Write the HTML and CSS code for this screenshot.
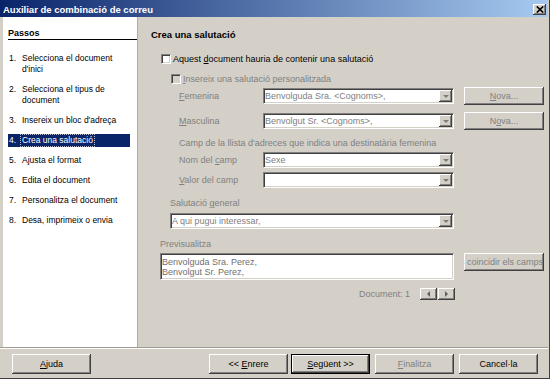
FILE: index.html
```html
<!DOCTYPE html>
<html lang="ca">
<head>
<meta charset="utf-8">
<title>Auxiliar de combinació de correu</title>
<link rel="stylesheet" href="styles.css">
</head>
<body>
<div class="window">
  <div class="titlebar">
    <span class="title">Auxiliar de combinació de correu</span>
    <span class="close"><svg width="8" height="7" viewBox="0 0 8 7"><path d="M0.8 0.5 L7.2 6.5 M7.2 0.5 L0.8 6.5" stroke="#000" stroke-width="1.7" fill="none"/></svg></span>
  </div>
  <div class="main">
    <div class="steps">
      <div class="steps-head">Passos</div>
      <ol class="step-list">
        <li class="step"><span class="num">1.</span><span class="label">Selecciona el document d'inici</span></li>
        <li class="step"><span class="num">2.</span><span class="label">Selecciona el tipus de document</span></li>
        <li class="step"><span class="num">3.</span><span class="label">Insereix un bloc d'adreça</span></li>
        <li class="step current"><span class="num">4.</span><span class="label"><span class="focus">Crea una salutació</span></span></li>
        <li class="step"><span class="num">5.</span><span class="label">Ajusta el format</span></li>
        <li class="step"><span class="num">6.</span><span class="label">Edita el document</span></li>
        <li class="step"><span class="num">7.</span><span class="label">Personalitza el document</span></li>
        <li class="step"><span class="num">8.</span><span class="label">Desa, imprimeix o envia</span></li>
      </ol>
    </div>
    <div class="page">
      <div class="page-title">Crea una salutació</div>
      <div class="check check-main"><span class="box"></span><span>Aquest <u>d</u>ocument hauria de contenir una salutació</span></div>
      <div class="check check-sub dim"><span class="box box-off"></span><span><u>I</u>nsereix una salutació personalitzada</span></div>
      <div class="salut-grid">
        <div class="flabel dim"><u>F</u>emenina</div>
        <div class="combo"><span class="combo-text">Benvolguda Sra. &lt;Cognoms&gt;,</span><span class="combo-btn"></span></div>
        <div class="btn side-btn dim"><span><u>N</u>ova...</span></div>
        <div class="flabel dim"><u>M</u>asculina</div>
        <div class="combo"><span class="combo-text">Benvolgut Sr. &lt;Cognoms&gt;,</span><span class="combo-btn"></span></div>
        <div class="btn side-btn dim"><span>N<u>o</u>va...</span></div>
      </div>
      <div class="note dim">Camp de la llista d'adreces que indica una destinatària femenina</div>
      <div class="field-grid">
        <div class="flabel dim">Nom del <u>c</u>amp</div>
        <div class="combo"><span class="combo-text">Sexe</span><span class="combo-btn"></span></div>
        <div class="flabel dim"><u>V</u>alor del camp</div>
        <div class="combo"><span class="combo-text"></span><span class="combo-btn"></span></div>
      </div>
      <div class="gen-label dim">Salutació <u>g</u>eneral</div>
      <div class="combo gen-combo"><span class="combo-text">A qui pugui interessar,</span><span class="combo-btn"></span></div>
      <div class="prev-label dim">Previsualitza</div>
      <div class="prev-row">
        <div class="preview">Benvolguda Sra. Perez,<br>Benvolgut Sr. Perez,</div>
        <div class="btn match-btn dim"><span>Fes coincidir els camps</span></div>
      </div>
      <div class="doc-row">
        <span class="doc-text dim">Document: 1</span>
        <span class="btn nav-btn"><span class="tri-left"></span></span>
        <span class="btn nav-btn"><span class="tri-right"></span></span>
      </div>
    </div>
  </div>
  <div class="buttonbar">
    <div class="btn pbtn"><span><u>A</u>juda</span></div>
    <div class="spacer"></div>
    <div class="btn pbtn"><span>&lt;&lt; <u>E</u>nrere</span></div>
    <div class="btn pbtn default gap3"><span><u>S</u>egüent &gt;&gt;</span></div>
    <div class="btn pbtn dim gap5"><span><u>F</u>inalitza</span></div>
    <div class="btn pbtn gap5"><span>Cancel·la</span></div>
  </div>
</div>
</body>
</html>
```
FILE: styles.css
```css
body {
  margin: 0;
  font-family: "Liberation Sans", Arial, sans-serif;
  font-size: 9px;
  color: #000;
  background: #d4d0c8;
}

.window {
  width: 550px;
  height: 379px;
  box-sizing: border-box;
  display: flex;
  flex-direction: column;
  background: #d4d0c8;
  border-right: 1px solid #404040;
  border-bottom: 1px solid #404040;
  padding-right: 1px;
  overflow: hidden;
}

.titlebar {
  flex: none;
  height: 17px;
  display: flex;
  align-items: center;
  justify-content: space-between;
  padding: 0 2px 0 3px;
  background: linear-gradient(to right, #0a246a, #a6caf0);
  color: #fff;
  font-weight: bold;
  font-size: 9.5px;
}

.title { padding-top: 1px; }

.close {
  width: 13px;
  height: 11px;
  margin-top: 2px;
  box-sizing: border-box;
  background: #d4d0c8;
  box-shadow: inset -1px -1px #404040, inset 1px 1px #fff, inset -2px -2px #808080;
  display: flex;
  align-items: center;
  justify-content: center;
}

.main {
  flex: none;
  height: 330px;
  display: flex;
}

.steps {
  width: 134px;
  margin-left: 3px;
  background: #fff;
  border-right: 1px solid #b0aca4;
}

.steps-head {
  margin: 11px 0 0 5px;
  line-height: 11px;
  font-weight: bold;
  border-bottom: 1px solid #000;
}

.step-list {
  list-style: none;
  margin: 12px 7px 0 5px;
  padding: 0;
  font-size: 8.5px;
}

.step {
  display: flex;
  line-height: 11px;
  padding: 1px 0 1px 1px;
  margin-bottom: 7px;
}

.num { width: 13px; flex: none; }
.label { flex: 1; }

.step.current {
  background: #0a246a;
  color: #fff;
  padding: 0 0 0 1px;
}
.current .num { line-height: 13px; }
.current .label { display: flex; }
.focus {
  border: 1px dotted #b8b8c8;
  line-height: 11px;
  margin-left: -2px;
  padding: 0 1px;
}

.page {
  flex: 1;
  padding-left: 13px;
  display: flex;
  flex-direction: column;
  align-items: flex-start;
}

.page-title {
  margin-top: 12px;
  line-height: 11px;
  font-weight: bold;
  font-size: 9.5px;
}

.dim { color: #808080; }

.check {
  display: flex;
  align-items: center;
  height: 12px;
  line-height: 11px;
}
.check-main { margin: 13px 0 0 10px; }
.check-sub { margin: 8px 0 0 20px; }

.box {
  flex: none;
  width: 10px;
  height: 10px;
  box-sizing: border-box;
  margin-right: 2px;
  background: #fff;
  border: 1px solid;
  border-color: #808080 #fff #fff #808080;
  box-shadow: inset 1px 1px #404040, inset -1px -1px #d4d0c8;
}
.box-off { background: #d4d0c8; }

.salut-grid {
  display: grid;
  grid-template-columns: 84px 191px 90px;
  grid-auto-rows: 18px;
  row-gap: 7px;
  align-items: center;
  margin: 2px 0 0 28px;
}

.flabel { line-height: 11px; }

.combo {
  box-sizing: border-box;
  height: 16px;
  display: flex;
  padding: 1px;
  background: #fff;
  border: 1px solid;
  border-color: #808080 #fff #fff #808080;
  box-shadow: inset 1px 1px #404040, inset -1px -1px #d4d0c8;
}
.combo-text {
  flex: 1;
  line-height: 12px;
  color: #808080;
  white-space: nowrap;
  overflow: hidden;
}
.combo-btn {
  flex: none;
  width: 13px;
  background: #d4d0c8;
  box-shadow: inset -1px -1px #404040, inset 1px 1px #fff, inset -2px -2px #808080;
  display: flex;
  align-items: center;
  justify-content: center;
}
.combo-btn::after {
  content: "";
  border-top: 3px solid #7c7c7c;
  border-left: 3px solid transparent;
  border-right: 3px solid transparent;
}

.btn {
  box-sizing: border-box;
  display: flex;
  align-items: center;
  justify-content: center;
  background: #d4d0c8;
  box-shadow: inset -1px -1px #404040, inset 1px 1px #fff, inset -2px -2px #808080;
  white-space: nowrap;
  overflow: hidden;
}

.side-btn {
  width: 80px;
  height: 18px;
  margin-left: 10px;
}

.note {
  margin: 8px 0 0 28px;
  line-height: 11px;
}

.field-grid {
  display: grid;
  grid-template-columns: 84px 191px;
  grid-auto-rows: 16px;
  row-gap: 4px;
  align-items: center;
  margin: 3px 0 0 28px;
}

.gen-label {
  margin: 10px 0 0 19px;
  line-height: 11px;
}
.gen-combo {
  width: 284px;
  margin: 4px 0 0 19px;
}

.prev-label {
  margin: 10px 0 0 9px;
  line-height: 11px;
}

.prev-row {
  display: flex;
  align-items: flex-start;
  margin: 3px 0 0 9px;
}

.preview {
  box-sizing: border-box;
  width: 294px;
  height: 27px;
  padding: 3px 0 0 1px;
  line-height: 10px;
  color: #707070;
  background: #fff;
  border: 1px solid;
  border-color: #808080 #fff #fff #808080;
  box-shadow: inset 1px 1px #404040, inset -1px -1px #d4d0c8;
}

.match-btn {
  width: 80px;
  height: 18px;
  margin-left: 10px;
  justify-content: flex-end;
  padding-right: 1px;
}

.doc-row {
  width: 295px;
  height: 12px;
  margin: 8px 0 0 9px;
  display: flex;
  justify-content: flex-end;
  align-items: center;
}
.doc-text { margin-right: 9px; line-height: 11px; }
.nav-btn {
  width: 17px;
  height: 12px;
  margin-left: 1px;
}
.tri-left {
  border-right: 3px solid #606060;
  border-top: 3px solid transparent;
  border-bottom: 3px solid transparent;
}
.tri-right {
  border-left: 3px solid #606060;
  border-top: 3px solid transparent;
  border-bottom: 3px solid transparent;
}

.buttonbar {
  flex: 1;
  display: flex;
  align-items: flex-start;
  border-top: 1px solid #a09c94;
  box-shadow: inset 0 1px #fff;
  padding: 6px 10px 0 12px;
}
.spacer { flex: 1; }

.pbtn {
  width: 79px;
  height: 20px;
}
.pbtn.default { border: 1px solid #000; }
.gap3 { margin-left: 3px; }
.gap5 { margin-left: 5px; }
```
